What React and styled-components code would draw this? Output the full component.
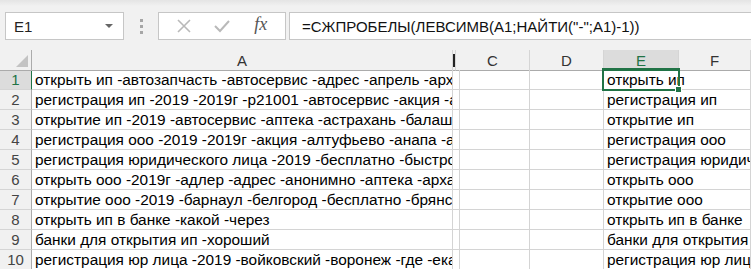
import React from 'react'
import styled, {createGlobalStyle} from 'styled-components'

const Global = createGlobalStyle`
  html, body {
    margin: 0;
    padding: 0;
    background: #fff;
    overflow: hidden;
  }
  body {
    font-family: "Liberation Sans", Arial, sans-serif;
  }
`

const Toolbar = styled.div`
  height: 50px;
  box-sizing: border-box;
  padding: 12px 0 0 5px;
  display: flex;
  align-items: flex-start;
  background: linear-gradient(#e4e4e4 0px, #f1f1f1 6px, #f1f1f1 100%);
`

const NameBox = styled.div`
  width: 119px;
  height: 28px;
  box-sizing: border-box;
  background: #fff;
  border: 1px solid #c6c6c6;
  display: flex;
  align-items: center;
  justify-content: space-between;
  padding: 0 8px 0 8px;
  font-size: 15px;
  color: #222;
`

const Caret = styled.span`
  width: 0;
  height: 0;
  border-left: 4px solid transparent;
  border-right: 4px solid transparent;
  border-top: 4px solid #666;
  margin-right: 2px;
`

const Grip = styled.div`
  width: 34px;
  height: 28px;
  display: flex;
  flex-direction: column;
  align-items: center;
  justify-content: center;
  gap: 3px;
  span {
    width: 3px;
    height: 3px;
    background: #a6a6a6;
  }
`

const Buttons = styled.div`
  width: 128px;
  height: 28px;
  box-sizing: border-box;
  background: #fff;
  border: 1px solid #c6c6c6;
  display: flex;
  align-items: center;
  justify-content: space-around;
  padding: 0 6px;
`

const Fx = styled.span`
  font-family: "Liberation Serif", "Times New Roman", serif;
  font-style: italic;
  font-size: 18px;
  color: #555;
  margin-top: -3px;
`

const Formula = styled.div`
  flex: 1;
  height: 28px;
  margin-left: 3px;
  box-sizing: border-box;
  background: #fff;
  border: 1px solid #c6c6c6;
  border-right: none;
  display: flex;
  align-items: center;
  padding-left: 12px;
  font-size: 15px;
  color: #111;
  white-space: nowrap;
  overflow: hidden;
`

const Grid = styled.div`
  display: grid;
  grid-template-columns: 32px 421px 3px 74px 74px 75px 1fr;
  grid-auto-rows: 20px;
  font-size: 15.4px;
`

const Head = styled.div`
  height: 21px;
  box-sizing: border-box;
  background: ${p => (p.$active ? '#dcdcdc' : '#f1f1f1')};
  color: ${p => (p.$active ? '#217346' : '#333')};
  border-right: 1px solid #d5d5d5;
  border-bottom: 1px solid ${p => (p.$active ? '#217346' : '#ababab')};
  display: flex;
  align-items: center;
  justify-content: center;
  overflow: hidden;
  font-size: 15px;
`

const Corner = styled(Head)`
  position: relative;
  border-right: 1px solid #ababab;
  &::after {
    content: '';
    position: absolute;
    right: 3px;
    bottom: 3px;
    border-left: 12px solid transparent;
    border-bottom: 12px solid #c3c3c3;
  }
`

const NarrowB = styled(Head)`
  &::before {
    content: '';
    width: 2px;
    height: 13px;
    background: #222;
  }
`

const RowHead = styled.div`
  box-sizing: border-box;
  background: ${p => (p.$active ? '#dcdcdc' : '#f1f1f1')};
  color: ${p => (p.$active ? '#217346' : '#444')};
  border-right: 1px solid ${p => (p.$active ? '#217346' : '#ababab')};
  border-bottom: 1px solid #d5d5d5;
  display: flex;
  align-items: center;
  justify-content: center;
  font-size: 15px;
`

const Cell = styled.div`
  box-sizing: border-box;
  border-right: 1px solid #d4d4d4;
  border-bottom: 1px solid #d4d4d4;
  padding: 0 3px;
  line-height: 19px;
  white-space: nowrap;
  overflow: hidden;
  color: #000;
  grid-column: ${p => (p.$span ? `span ${p.$span}` : 'auto')};
  position: relative;
`

const Selection = styled.div`
  position: absolute;
  left: -2px;
  top: -2px;
  width: 78px;
  height: 23px;
  box-sizing: border-box;
  border: 2px solid #217346;
  pointer-events: none;
  &::after {
    content: '';
    position: absolute;
    right: -4px;
    bottom: -4px;
    width: 5px;
    height: 5px;
    background: #217346;
    border: 1px solid #fff;
  }
`

const SelCell = styled(Cell)`
  overflow: visible;
  z-index: 2;
`

const rows = [
  ['открыть ип -автозапчасть -автосервис -адрес -апрель -архангельск -астрахань', 'открыть ип'],
  ['регистрация ип -2019 -2019г -р21001 -автосервис -акция -алтуфьево -анапа', 'регистрация ип'],
  ['открытие ип -2019 -автосервис -аптека -астрахань -балашиха -барнаул', 'открытие ип'],
  ['регистрация ооо -2019 -2019г -акция -алтуфьево -анапа -архангельск', 'регистрация ооо'],
  ['регистрация юридического лица -2019 -бесплатно -быстро -воронеж', 'регистрация юридического лица'],
  ['открыть ооо -2019г -адлер -адрес -анонимно -аптека -архангельск', 'открыть ооо'],
  ['открытие ооо -2019 -барнаул -белгород -бесплатно -брянск -вологда', 'открытие ооо'],
  ['открыть ип в банке -какой -через', 'открыть ип в банке'],
  ['банки для открытия ип -хороший', 'банки для открытия ип'],
  ['регистрация юр лица -2019 -войковский -воронеж -где -екатеринбург', 'регистрация юр лица'],
]

function XIcon() {
  return (
    <svg width="14" height="14" viewBox="0 0 14 14">
      <path d="M1 1 L13 13 M13 1 L1 13" stroke="#b9b9b9" strokeWidth="1.6" fill="none" />
    </svg>
  )
}

function CheckIcon() {
  return (
    <svg width="16" height="14" viewBox="0 0 16 14">
      <path d="M1 7 L6 12 L15 2" stroke="#b9b9b9" strokeWidth="2" fill="none" />
    </svg>
  )
}

export default function App() {
  return (
    <>
      <Global />
      <Toolbar>
        <NameBox>
          <span>E1</span>
          <Caret />
        </NameBox>
        <Grip>
          <span />
          <span />
          <span />
        </Grip>
        <Buttons>
          <XIcon />
          <CheckIcon />
          <Fx>fx</Fx>
        </Buttons>
        <Formula>=СЖПРОБЕЛЫ(ЛЕВСИМВ(A1;НАЙТИ("-";A1)-1))</Formula>
      </Toolbar>
      <Grid>
        <Corner />
        <Head>A</Head>
        <NarrowB />
        <Head>C</Head>
        <Head>D</Head>
        <Head $active>E</Head>
        <Head>F</Head>
        {rows.map((r, i) => (
          <React.Fragment key={i}>
            <RowHead $active={i === 0}>{i + 1}</RowHead>
            <Cell>{r[0]}</Cell>
            <Cell />
            <Cell />
            <Cell />
            {i === 0 ? (
              <SelCell $span={2}>
                {r[1]}
                <Selection />
              </SelCell>
            ) : (
              <Cell $span={2}>{r[1]}</Cell>
            )}
          </React.Fragment>
        ))}
      </Grid>
    </>
  )
}
